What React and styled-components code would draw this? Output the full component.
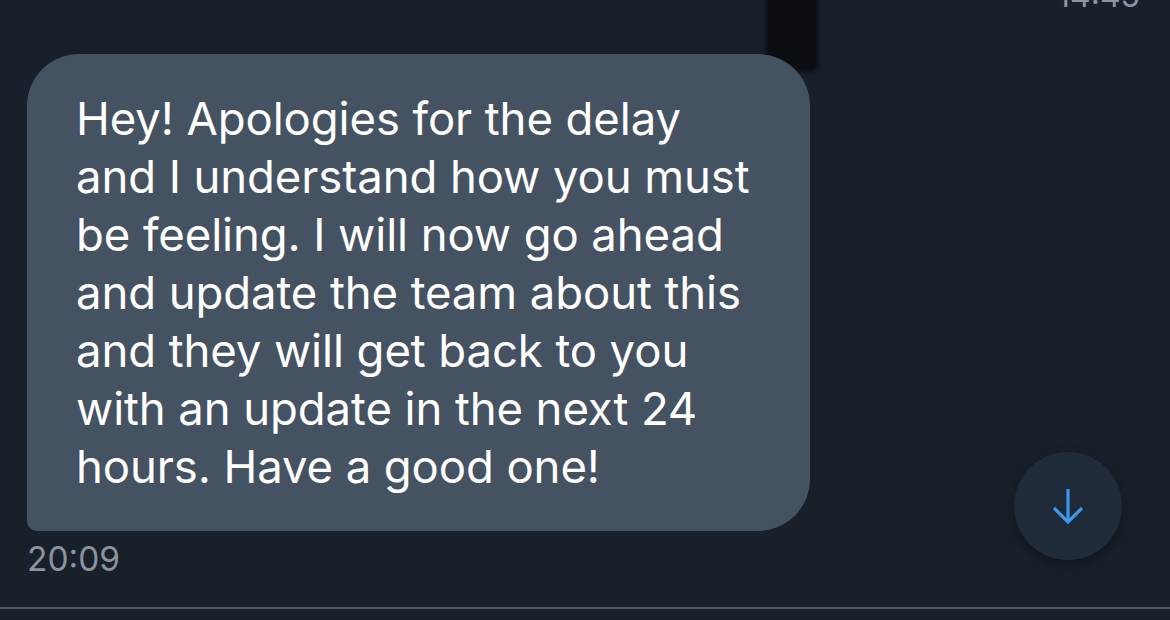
import React from 'react'
import styled, { createGlobalStyle } from 'styled-components'

const lines = [
  'Hey! Apologies for the delay',
  'and I understand how you must',
  'be feeling. I will now go ahead',
  'and update the team about this',
  'and they will get back to you',
  'with an update in the next 24',
  'hours. Have a good one!',
]

export default function App() {
  return (
    <>
      <GlobalStyle />
      <Screen>
        <Shade />
        <TopStamp>14:45</TopStamp>
        <Thread>
          <Bubble>
            {lines.map((l, i) => (
              <Line key={i}>{l}</Line>
            ))}
          </Bubble>
          <Time>20:09</Time>
        </Thread>
        <ScrollDown aria-label="scroll down">
          <svg width="34" height="36" viewBox="0 0 34 36" fill="none">
            <path d="M17 1 V33" stroke="#3d96ea" strokeWidth="3.2" />
            <path d="M3 20 L17 34 L31 20" stroke="#3d96ea" strokeWidth="3.2" strokeLinejoin="miter" />
          </svg>
        </ScrollDown>
      </Screen>
    </>
  )
}

const GlobalStyle = createGlobalStyle`
html, body {
  margin: 0;
  padding: 0;
  background: #18202a;
}
body {
  font-family: Inter, "Open Sans", sans-serif;
}
`;

const Screen = styled.div`
position: relative;
width: 1170px;
height: 620px;
overflow: hidden;
background: #18202a;
display: flex;
flex-direction: column;
&::after {
  content: '';
  position: absolute;
  left: 0;
  right: 0;
  top: 607px;
  height: 2px;
  background: #4c5664;
}
`;

const Shade = styled.div`
position: absolute;
left: 766px;
top: -10px;
width: 52px;
height: 82px;
border-radius: 6px;
background: #0b0e13;
filter: blur(2px);
`;

const TopStamp = styled.div`
align-self: flex-end;
margin: -20px 30px 0 0;
height: 32px;
font-size: 32px;
line-height: 32px;
color: #8c95a0;
`;

const Thread = styled.div`
display: flex;
flex-direction: column;
align-items: flex-start;
padding: 42px 0 0 27px;
`;

const Bubble = styled.div`
position: relative;
width: 783px;
box-sizing: border-box;
padding: 36px 0 35px 49px;
background: #455262;
border-radius: 52px 52px 52px 10px;
`;

const Line = styled.div`
font-size: 45.5px;
line-height: 58px;
color: #ffffff;
letter-spacing: -0.1px;
white-space: nowrap;
`;

const Time = styled.div`
margin-top: 8px;
font-size: 33.5px;
line-height: 40px;
color: #8a939e;
`;

const ScrollDown = styled.button`
position: absolute;
left: 1014px;
top: 452px;
width: 108px;
height: 108px;
border-radius: 50%;
border: none;
background: #202b39;
box-shadow: 0 4px 12px rgba(0, 0, 0, 0.35);
display: flex;
align-items: center;
justify-content: center;
padding: 0;
`;
